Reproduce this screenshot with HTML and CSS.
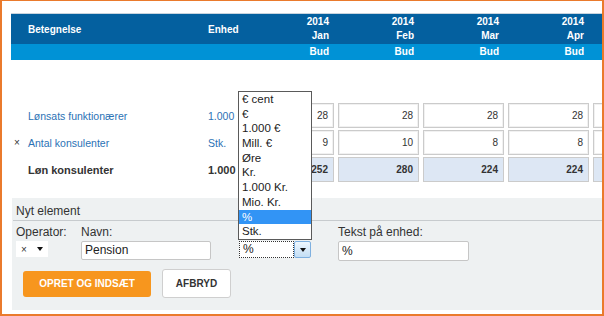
FILE: index.html
```html
<!DOCTYPE html>
<html lang="da">
<head>
<meta charset="utf-8">
<title>Budget</title>
<link rel="stylesheet" href="styles.css">
</head>
<body>
<div class="frame">
  <div class="sheet">
    <div class="hrow hrow-top">
      <div class="hc hc-name">Betegnelse</div>
      <div class="hc hc-unit">Enhed</div>
      <div class="hc hc-month">2014<br>Jan</div>
      <div class="hc hc-month">2014<br>Feb</div>
      <div class="hc hc-month">2014<br>Mar</div>
      <div class="hc hc-month">2014<br>Apr</div>
      <div class="hc hc-month"></div>
    </div>
    <div class="hrow hrow-sub">
      <div></div>
      <div></div>
      <div class="hc hc-sub">Bud</div>
      <div class="hc hc-sub">Bud</div>
      <div class="hc hc-sub">Bud</div>
      <div class="hc hc-sub">Bud</div>
      <div class="hc hc-sub"></div>
    </div>
    <div class="spacer"></div>
    <div class="drow">
      <div class="dname link"><span class="mark"></span>Lønsats funktionærer</div>
      <div class="dunit link">1.000</div>
      <div class="dcell"><span class="cellbox">28</span></div>
      <div class="dcell"><span class="cellbox">28</span></div>
      <div class="dcell"><span class="cellbox">28</span></div>
      <div class="dcell"><span class="cellbox">28</span></div>
      <div class="dcell"><span class="cellbox"></span></div>
    </div>
    <div class="drow">
      <div class="dname link"><span class="mark">×</span>Antal konsulenter</div>
      <div class="dunit link">Stk.</div>
      <div class="dcell"><span class="cellbox">9</span></div>
      <div class="dcell"><span class="cellbox">10</span></div>
      <div class="dcell"><span class="cellbox">8</span></div>
      <div class="dcell"><span class="cellbox">8</span></div>
      <div class="dcell"><span class="cellbox"></span></div>
    </div>
    <div class="drow sum">
      <div class="dname"><span class="mark"></span>Løn konsulenter</div>
      <div class="dunit">1.000</div>
      <div class="dcell"><span class="cellbox">252</span></div>
      <div class="dcell"><span class="cellbox">280</span></div>
      <div class="dcell"><span class="cellbox">224</span></div>
      <div class="dcell"><span class="cellbox">224</span></div>
      <div class="dcell"><span class="cellbox"></span></div>
    </div>
  </div>

  <div class="panel">
    <div class="ptitle">Nyt element</div>
    <div class="fields">
      <div class="field f-op">
        <label>Operator:</label>
        <div class="opsel"><span class="opx">×</span><span class="tri"></span></div>
      </div>
      <div class="field f-navn">
        <label>Navn:</label>
        <div class="input navn">Pension</div>
      </div>
      <div class="field f-enh">
        <label>&nbsp;</label>
        <div class="enhsel"><span class="enhval">%</span><span class="enhbtn"><span class="tri"></span></span></div>
      </div>
      <div class="field f-tekst">
        <label>Tekst på enhed:</label>
        <div class="input tekst">%</div>
      </div>
    </div>
    <div class="actions">
      <button class="btn btn-primary">OPRET OG INDSÆT</button>
      <button class="btn btn-default">AFBRYD</button>
    </div>
  </div>

  <div class="listbox">
    <div class="opt">€ cent</div>
    <div class="opt">€</div>
    <div class="opt">1.000 €</div>
    <div class="opt">Mill. €</div>
    <div class="opt">Øre</div>
    <div class="opt">Kr.</div>
    <div class="opt">1.000 Kr.</div>
    <div class="opt">Mio. Kr.</div>
    <div class="opt sel">%</div>
    <div class="opt">Stk.</div>
  </div>
</div>
</body>
</html>
```
FILE: styles.css
```css
* { box-sizing: border-box; }

body {
  margin: 0;
  font-family: "Liberation Sans", Arial, sans-serif;
  background: #fff;
}

.frame {
  position: relative;
  width: 604px;
  height: 316px;
  border: 2px solid #ea7a2c;
  border-top-width: 1px;
  overflow: hidden;
  background: #fff;
}

.sheet {
  margin: 12px 0 0 9px;
  width: 663px;
}

.hrow,
.drow {
  display: grid;
  grid-template-columns: 189px 49px repeat(5, 85px);
}

.hrow-top {
  height: 31px;
  border-top: 1px solid #c8d4de;
  background: #04609f;
  color: #fff;
  font-size: 10px;
  font-weight: bold;
}

.hc-name {
  padding: 1px 0 0 17px;
  line-height: 30px;
}

.hc-unit {
  padding: 1px 0 0 8px;
  line-height: 30px;
}

.hc-month {
  padding: 1px 5px 0 0;
  line-height: 14px;
  text-align: right;
}

.hrow-sub {
  height: 16px;
  background: #0092d6;
  color: #fff;
  font-size: 10px;
  font-weight: bold;
  line-height: 16px;
}

.hc-sub {
  padding-right: 5px;
  text-align: right;
}

.spacer { height: 42px; }

.drow {
  height: 27px;
  align-items: center;
  font-size: 10.5px;
  color: #333;
}

.link { color: #2b72b5; }

.dname {
  display: flex;
  padding-left: 3px;
}

.mark {
  width: 14px;
  color: #333;
  font-size: 10px;
}

.dunit { padding-left: 8px; }

.sum .dname,
.sum .dunit {
  font-size: 11px;
  font-weight: bold;
}

.dcell {
  height: 27px;
  padding: 1px 0 1px 4px;
}

.cellbox {
  display: block;
  height: 25px;
  border: 1px solid #cbcbcb;
  box-shadow: inset 0 0 0 1px #f1f1f1;
  padding-right: 5px;
  text-align: right;
  font-size: 10px;
  line-height: 23px;
  color: #333;
  background: #fff;
}

.sum .cellbox {
  background: #dde7f4;
  box-shadow: none;
  font-weight: bold;
}

/* New element panel */
.panel {
  margin: 15px 0 0 10px;
  height: 112px;
  background: #eef1f2;
}

.ptitle {
  height: 23px;
  margin-left: 1px;
  padding: 6px 0 0 3px;
  border-bottom: 1px solid #c7cbce;
  font-size: 12px;
  line-height: 14px;
  color: #333;
}

.fields {
  display: flex;
  margin-top: 4px;
  padding-left: 4px;
}

.field label {
  display: block;
  margin-bottom: 2px;
  font-size: 12px;
  line-height: 14px;
  color: #333;
}

.f-op { width: 65px; }
.f-navn { width: 157px; }
.f-enh { width: 100px; }
.f-tekst { width: 131px; }

.opsel {
  display: flex;
  align-items: center;
  width: 32px;
  height: 16px;
  margin-top: 1px;
  background: #fff;
  padding-left: 5px;
}

.opx {
  width: 16px;
  font-size: 10px;
  color: #333;
}

.tri {
  width: 0;
  height: 0;
  border-left: 3.5px solid transparent;
  border-right: 3.5px solid transparent;
  border-top: 4px solid #111;
}

.input {
  height: 20px;
  border: 1px solid #c6c6c6;
  border-radius: 2px;
  background: #fff;
  padding-left: 3px;
  font-size: 12px;
  line-height: 18px;
  color: #222;
}

.navn { width: 130px; height: 19px; line-height: 17px; }
.tekst { width: 131px; }

.enhsel {
  display: flex;
  width: 72px;
  height: 17px;
  margin-left: 1px;
}

.enhval {
  flex: 1;
  border: 1px dotted #333;
  padding-left: 3px;
  font-size: 12px;
  line-height: 15px;
  color: #222;
  background: #fff;
}

.enhbtn {
  display: flex;
  align-items: center;
  justify-content: center;
  width: 17px;
  border: 1px solid #7eb0e0;
  border-radius: 2px;
  background: linear-gradient(#eef7fe, #c3def5);
}

.actions {
  display: flex;
  align-items: center;
  gap: 11px;
  margin: 8px 0 0 11px;
}

.btn {
  font-family: "Liberation Sans", Arial, sans-serif;
  font-size: 10px;
  font-weight: bold;
  border-radius: 3px;
  padding: 0;
  cursor: pointer;
}

.btn-primary {
  width: 128px;
  height: 26px;
  border: none;
  background: #f7961e;
  color: #fff;
}

.btn-default {
  width: 69px;
  height: 29px;
  border: 1px solid #cfcfcf;
  background: #fff;
  color: #333;
}

/* Open dropdown list */
.listbox {
  position: absolute;
  left: 236px;
  top: 90px;
  width: 74px;
  height: 149px;
  border: 1px solid #5a5a5a;
  background: #fff;
  overflow: hidden;
  font-size: 11.5px;
}

.opt {
  height: 14.7px;
  padding-left: 3px;
  line-height: 14.7px;
  color: #222;
}

.opt.sel {
  background: #3294f5;
  color: #fff;
}
```
